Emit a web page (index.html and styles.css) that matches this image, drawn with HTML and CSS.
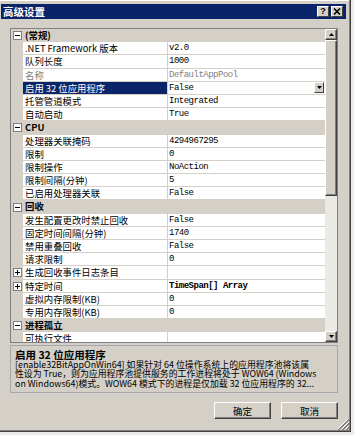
FILE: index.html
```html
<!DOCTYPE html>
<html lang="zh-CN">
<head>
    <meta charset="utf-8">
    <title>高级设置</title>
    <link rel="stylesheet" href="styles.css">
</head>
<body>

<div class="window">
    <div class="titlebar">
        <span class="title">高级设置</span>
        <div class="caption-btns">
            <span class="cbtn help">?</span>
            <span class="cbtn">
                <svg width="8" height="7" viewBox="0 0 8 7"><path d="M1 0.5l6 6M7 0.5l-6 6" stroke="#000" stroke-width="1.6"/></svg>
            </span>
        </div>
    </div>

    <div class="content">
        <div class="grid">
            <div class="rows">
                <div class="row cat"><div class="gutter"><svg class="tg" width="9" height="9"><rect x="0.5" y="0.5" width="8" height="8" fill="#fff" stroke="#808080"/><path d="M2 4.5h5" stroke="#000"/></svg></div><div class="name">(常规)</div></div>
                <div class="row"><div class="gutter"></div><div class="name">.NET Framework 版本</div><div class="value">v2.0</div></div>
                <div class="row"><div class="gutter"></div><div class="name">队列长度</div><div class="value">1000</div></div>
                <div class="row off"><div class="gutter"></div><div class="name">名称</div><div class="value">DefaultAppPool</div></div>
                <div class="row sel"><div class="gutter"></div><div class="name">启用 32 位应用程序</div><div class="value combo">False<span class="drop"><svg width="5" height="3"><path d="M0 0h5l-2.5 3z" fill="#000"/></svg></span></div></div>
                <div class="row"><div class="gutter"></div><div class="name">托管管道模式</div><div class="value">Integrated</div></div>
                <div class="row"><div class="gutter"></div><div class="name">自动启动</div><div class="value">True</div></div>
                <div class="row cat"><div class="gutter"><svg class="tg" width="9" height="9"><rect x="0.5" y="0.5" width="8" height="8" fill="#fff" stroke="#808080"/><path d="M2 4.5h5" stroke="#000"/></svg></div><div class="name">CPU</div></div>
                <div class="row"><div class="gutter"></div><div class="name">处理器关联掩码</div><div class="value">4294967295</div></div>
                <div class="row"><div class="gutter"></div><div class="name">限制</div><div class="value">0</div></div>
                <div class="row"><div class="gutter"></div><div class="name">限制操作</div><div class="value">NoAction</div></div>
                <div class="row"><div class="gutter"></div><div class="name">限制间隔(分钟)</div><div class="value">5</div></div>
                <div class="row"><div class="gutter"></div><div class="name">已启用处理器关联</div><div class="value">False</div></div>
                <div class="row cat"><div class="gutter"><svg class="tg" width="9" height="9"><rect x="0.5" y="0.5" width="8" height="8" fill="#fff" stroke="#808080"/><path d="M2 4.5h5" stroke="#000"/></svg></div><div class="name">回收</div></div>
                <div class="row"><div class="gutter"></div><div class="name">发生配置更改时禁止回收</div><div class="value">False</div></div>
                <div class="row"><div class="gutter"></div><div class="name">固定时间间隔(分钟)</div><div class="value">1740</div></div>
                <div class="row"><div class="gutter"></div><div class="name">禁用重叠回收</div><div class="value">False</div></div>
                <div class="row"><div class="gutter"></div><div class="name">请求限制</div><div class="value">0</div></div>
                <div class="row"><div class="gutter"><svg class="tg" width="9" height="9"><rect x="0.5" y="0.5" width="8" height="8" fill="#fff" stroke="#808080"/><path d="M2 4.5h5M4.5 2v5" stroke="#000"/></svg></div><div class="name">生成回收事件日志条目</div><div class="value"></div></div>
                <div class="row"><div class="gutter"><svg class="tg" width="9" height="9"><rect x="0.5" y="0.5" width="8" height="8" fill="#fff" stroke="#808080"/><path d="M2 4.5h5M4.5 2v5" stroke="#000"/></svg></div><div class="name">特定时间</div><div class="value bold">TimeSpan[] Array</div></div>
                <div class="row"><div class="gutter"></div><div class="name">虚拟内存限制(KB)</div><div class="value">0</div></div>
                <div class="row"><div class="gutter"></div><div class="name">专用内存限制(KB)</div><div class="value">0</div></div>
                <div class="row cat"><div class="gutter"><svg class="tg" width="9" height="9"><rect x="0.5" y="0.5" width="8" height="8" fill="#fff" stroke="#808080"/><path d="M2 4.5h5" stroke="#000"/></svg></div><div class="name">进程孤立</div></div>
                <div class="row"><div class="gutter"></div><div class="name">可执行文件</div><div class="value"></div></div>
            </div>
            <div class="scrollbar">
                <div class="sb-btn"><svg width="5" height="3"><path d="M0 3h5l-2.5-3z" fill="#000"/></svg></div>
                <div class="sb-thumb"></div>
                <div class="sb-track"></div>
                <div class="sb-btn"><svg width="5" height="3"><path d="M0 0h5l-2.5 3z" fill="#000"/></svg></div>
            </div>
        </div>

        <div class="desc">
            <div class="desc-title">启用 32 位应用程序</div>
            <div class="desc-text">[enable32BitAppOnWin64] 如果针对 64 位操作系统上的应用程序池将该属<br>性设为 True，则为应用程序池提供服务的工作进程将处于 WOW64 (Windows<br>on Windows64)模式。WOW64 模式下的进程是仅加载 32 位应用程序的 32...</div>
        </div>

        <div class="buttons">
            <button class="btn">确定</button>
            <button class="btn">取消</button>
        </div>
    </div>

    <svg class="grip" width="12" height="12" viewBox="0 0 12 12">
        <path d="M11 1L1 11M11 5L5 11M11 9L9 11" stroke="#fff"/>
        <path d="M12 1L1 12M12 2L2 12M12 5L5 12M12 6L6 12M12 9L9 12M12 10L10 12" stroke="#808080"/>
    </svg>
</div>

</body>
</html>
```

FILE: styles.css
```css
* {
    margin: 0;
    padding: 0;
    box-sizing: border-box;
}

body {
    width: 354px;
    height: 435px;
    overflow: hidden;
    background-color: #ecebe8;
    font-family: "Noto Sans CJK SC", "Liberation Sans", sans-serif;
    font-size: 9.4px;
    color: #000;
}

.window {
    position: relative;
    width: 351px;
    height: 432px;
    padding: 4px 4px 0 1px;
    background-color: #d4d0c8;
    border-right: 1px solid #404040;
    border-bottom: 1px solid #404040;
    box-shadow: inset -1px -1px 0 #808080, inset 0 1px 0 #fff;
}

/* title bar */
.titlebar {
    height: 15px;
    display: flex;
    align-items: center;
    justify-content: space-between;
    padding: 0 3px 0 2px;
    background-color: #0a246a;
}

.title {
    color: #fff;
    font-weight: bold;
    font-size: 10.5px;
    line-height: 15px;
}

.caption-btns {
    display: flex;
    gap: 2px;
}

.cbtn {
    width: 12px;
    height: 11px;
    display: flex;
    align-items: center;
    justify-content: center;
    background-color: #d4d0c8;
    border-top: 1px solid #fff;
    border-left: 1px solid #fff;
    border-right: 1px solid #404040;
    border-bottom: 1px solid #404040;
    font-family: "Liberation Sans", sans-serif;
    font-weight: bold;
    font-size: 9px;
    line-height: 9px;
}

/* body */
.content {
    padding: 9px 8px 0 9px;
}

.grid {
    height: 315px;
    display: flex;
    border: 1px solid #808080;
    background-color: #fff;
}

.rows {
    flex: 1;
    overflow: hidden;
}

.row {
    display: flex;
    height: 13.2px;
    line-height: 12.2px;
    white-space: nowrap;
}

.gutter {
    width: 12px;
    flex: none;
    display: flex;
    align-items: center;
    padding-left: 2px;
    background-color: #d4d0c8;
}

.tg {
    display: block;
}

.name {
    width: 145px;
    flex: none;
    padding-left: 2px;
    overflow: hidden;
    border-right: 1px solid #d4d0c8;
    border-bottom: 1px solid #d4d0c8;
}

.value {
    flex: 1;
    padding-left: 1px;
    overflow: hidden;
    border-bottom: 1px solid #d4d0c8;
    font-family: "Liberation Mono", "Noto Sans CJK SC", monospace;
    font-size: 9px;
    letter-spacing: -0.5px;
}

.value.bold {
    font-weight: bold;
}

.value.combo {
    display: flex;
    justify-content: space-between;
    align-items: center;
}

.drop {
    width: 10px;
    height: 11px;
    margin-right: 1px;
    display: flex;
    align-items: center;
    justify-content: center;
    background-color: #d4d0c8;
    border-top: 1px solid #fff;
    border-left: 1px solid #fff;
    border-right: 1px solid #404040;
    border-bottom: 1px solid #404040;
}

.row.cat {
    background-color: #d4d0c8;
}

.row.cat .name {
    flex: 1;
    border: none;
    font-weight: bold;
}

.row.sel .name {
    background-color: #0a246a;
    color: #fff;
}

.row.off {
    color: #808080;
}

/* scrollbar */
.scrollbar {
    width: 12px;
    flex: none;
    display: flex;
    flex-direction: column;
    background-color: #ebe9e4;
}

.sb-btn,
.sb-thumb {
    background-color: #d4d0c8;
    border-top: 1px solid #fff;
    border-left: 1px solid #fff;
    border-right: 1px solid #404040;
    border-bottom: 1px solid #404040;
    box-shadow: inset -1px -1px 0 #808080;
}

.sb-btn {
    height: 11px;
    display: flex;
    align-items: center;
    justify-content: center;
}

.sb-btn svg {
    display: block;
}

.sb-thumb {
    height: 156px;
}

.sb-track {
    flex: 1;
}

/* description */
.desc {
    height: 48px;
    margin-top: 2px;
    padding: 3px 4px 0 4px;
    border: 1px solid #a7a6aa;
    overflow: hidden;
    white-space: nowrap;
}

.desc-title {
    font-weight: bold;
    font-size: 10.5px;
    line-height: 11px;
}

.desc-text {
    font-size: 8.9px;
    line-height: 9.3px;
}

/* buttons */
.buttons {
    display: flex;
    justify-content: flex-end;
    gap: 10px;
    margin-top: 9px;
}

.btn {
    width: 57px;
    height: 17px;
    background-color: #d4d0c8;
    border-top: 1px solid #fff;
    border-left: 1px solid #fff;
    border-right: 1px solid #404040;
    border-bottom: 1px solid #404040;
    box-shadow: inset -1px -1px 0 #808080;
    font-family: "Noto Sans CJK SC", sans-serif;
    font-size: 9.6px;
    color: #000;
}

.grip {
    position: absolute;
    right: 1px;
    bottom: 1px;
}
```
